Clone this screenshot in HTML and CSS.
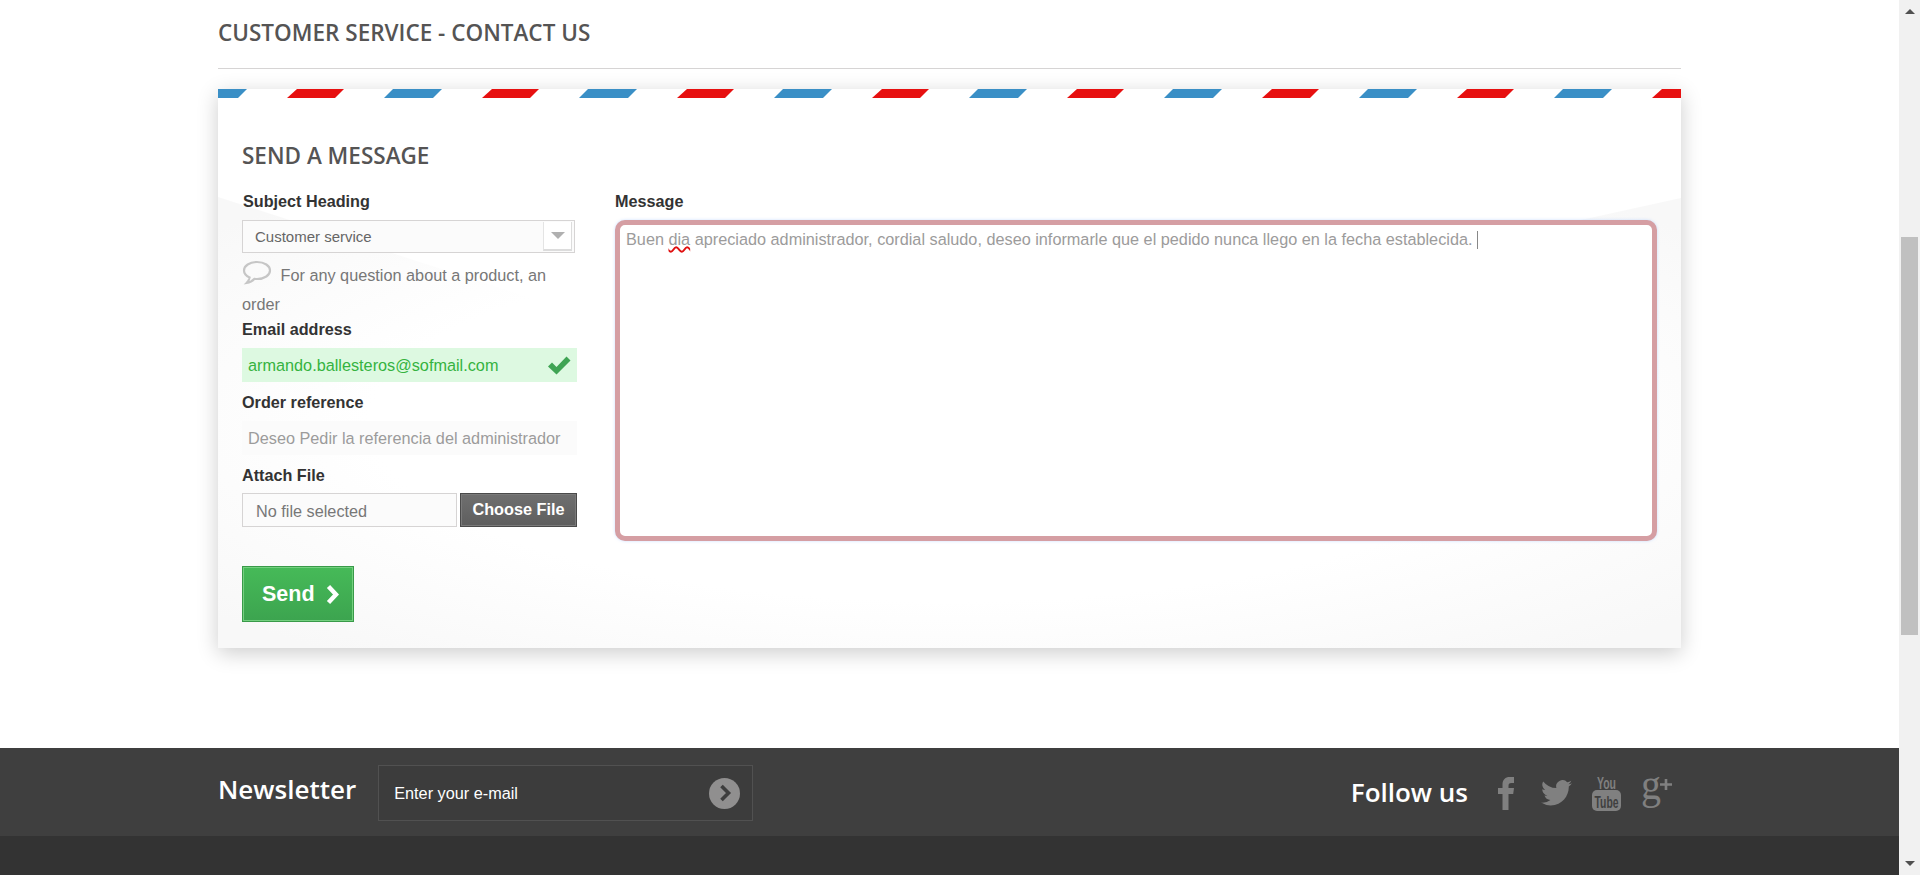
FILE: index.html
```html
<!DOCTYPE html>
<html lang="en">
<head>
  <meta charset="UTF-8" />
  <title>Customer service - Contact us</title>
  <link rel="stylesheet" href="styles.css">
</head>
<body>

  <div class="page">
    <div class="main">
      <h1 class="page-heading">CUSTOMER SERVICE - CONTACT US</h1>

      <form class="contact-form">
        <svg class="form-shade" viewBox="0 0 1463 559" preserveAspectRatio="none">
          <defs>
            <radialGradient id="shade" cx="50%" cy="50%" r="66%">
              <stop offset="0.6" stop-color="#ffffff" />
              <stop offset="1" stop-color="#f8f8f8" />
            </radialGradient>
          </defs>
          <polygon fill="url(#shade)" points="0,108 394,235 731,270 1463,109 1463,559 0,559" />
        </svg>

        <svg class="airmail" width="100%" height="9">
          <defs>
            <pattern id="stripes" width="195" height="9" patternUnits="userSpaceOnUse">
              <polygon fill="#3a8fc6" points="175,0 224,0 215,9 166,9" />
              <polygon fill="#3a8fc6" points="-20,0 29,0 20,9 -29,9" />
              <polygon fill="#e71010" points="79,0 126,0 117,9 69,9" />
            </pattern>
          </defs>
          <rect width="100%" height="9" fill="url(#stripes)" />
        </svg>

        <div class="form-body">
          <h3 class="form-title">SEND A MESSAGE</h3>
          <div class="form-cols">
            <div class="col-left">
              <div class="field subject">
                <label>Subject Heading</label>
                <div class="select-box">
                  <span>Customer service</span>
                  <span class="select-arrow"></span>
                </div>
                <p class="help-text">
                  <svg class="bubble" width="30" height="26" viewBox="0 0 30 26">
                    <path d="M15 2C7.500 2 2 5.800 2 10.500c0 3 2.200 5.400 5.600 6.900-.2 1.900-1.100 3.600-3 5.600 3.500-.5 6-2 7.900-4.200.8.100 1.700.2 2.500.2 7.500 0 13-3.800 13-8.500S22.500 2 15 2z" fill="none" stroke="#c6c6c6" stroke-width="2.200" />
                  </svg>
                  For any question about a product, an order
                </p>
              </div>
              <div class="field">
                <label>Email address</label>
                <div class="text-input ok">
                  <span>armando.ballesteros@sofmail.com</span>
                  <svg width="24" height="19" viewBox="0 0 24 19">
                    <path d="M1 10.500 5 6.500l4.500 4.500L19.500.5 23.500 4.500 9.500 18.500z" fill="#3fa454" />
                  </svg>
                </div>
              </div>
              <div class="field">
                <label>Order reference</label>
                <div class="text-input"><span>Deseo Pedir la referencia del administrador</span></div>
              </div>
              <div class="field">
                <label>Attach File</label>
                <div class="file-row">
                  <span class="file-name">No file selected</span>
                  <span class="file-btn">Choose File</span>
                </div>
              </div>
            </div>
            <div class="col-right">
              <label>Message</label>
              <div class="message-box">Buen <span class="typo">dia</span> apreciado administrador, cordial saludo, deseo informarle que el pedido nunca llego en la fecha establecida. <span class="caret"></span></div>
            </div>
          </div>
          <button class="send-btn" type="button">
            Send
            <svg width="14" height="21" viewBox="0 0 14 21">
              <path d="M2.500 2.500 10 10.500 2.500 18.500" fill="none" stroke="#fff" stroke-width="4.400" />
            </svg>
          </button>
        </div>
      </form>

      <footer class="footer">
        <div class="footer-top">
          <div class="footer-inner">
            <div class="newsletter">
              <h4>Newsletter</h4>
              <div class="news-input">
                <span>Enter your e-mail</span>
                <span class="news-go">
                  <svg width="16" height="20" viewBox="0 0 16 20">
                    <path d="M4.500 3l7 7-7 7" fill="none" stroke="#3d3d3d" stroke-width="3.600" />
                  </svg>
                </span>
              </div>
            </div>
            <div class="follow">
              <h4>Follow us</h4>
              <div class="social">
                <svg class="fb" width="16" height="33" viewBox="0 0 16 33">
                  <path d="M4.500 33V17H0v-6h4.500V7.500C4.500 2.500 7.500 0 11.500 0H16v6h-2.500C11 6 10.500 7 10.500 9v2H16l-.8 6h-4.700v16z" fill="#808080" />
                </svg>
                <svg width="31" height="26" viewBox="0 0 24 20">
                  <path d="M24 2.400c-.9.400-1.800.7-2.800.8 1-.6 1.800-1.600 2.200-2.700-1 .6-2 1-3.100 1.200A4.900 4.900 0 0 0 11.900 6.200 14 14 0 0 1 1.700 1a4.900 4.900 0 0 0 1.500 6.600c-.8 0-1.600-.2-2.200-.6v.1c0 2.400 1.700 4.400 3.900 4.800-.7.200-1.500.2-2.200.1.600 2 2.400 3.400 4.600 3.400A9.900 9.900 0 0 1 0 17.400 14 14 0 0 0 7.500 19.600c9 0 14-7.500 14-14v-.6c1-.7 1.800-1.600 2.500-2.600z" fill="#808080" />
                </svg>
                <svg class="yt" width="29" height="35" viewBox="0 0 29 35">
                  <rect x="0" y="14" width="29" height="21" rx="5" fill="#808080" />
                  <text class="yt-you" x="5" y="13" textLength="19" lengthAdjust="spacingAndGlyphs">You</text>
                  <text class="yt-tube" x="2.500" y="31.500" textLength="24" lengthAdjust="spacingAndGlyphs">Tube</text>
                </svg>
                <svg class="gp" width="31" height="31" viewBox="0 0 31 31">
                  <text class="gp-g" x="0" y="20.500" textLength="20" lengthAdjust="spacingAndGlyphs">g</text>
                  <path d="M19 6.500h12M25 1v11" fill="none" stroke="#808080" stroke-width="2.600" />
                </svg>
              </div>
            </div>
          </div>
        </div>
        <div class="footer-bottom"></div>
      </footer>
    </div>

    <div class="scrollbar">
      <span class="arrow up"></span>
      <div class="track"><div class="thumb"></div></div>
      <span class="arrow down"></span>
    </div>
  </div>

</body>
</html>
```

FILE: styles.css
```css
* {
  box-sizing: border-box;
}

html, body {
  height: 100%;
  margin: 0;
  overflow: hidden;
}

body {
  font-family: "Liberation Sans", Arial, sans-serif;
  font-size: 16.25px;
  color: #777;
  background: #fff;
}

.page {
  display: flex;
  height: 875px;
}

.main {
  flex: 1;
  display: flex;
  flex-direction: column;
  min-width: 0;
}

/* heading */
.page-heading {
  width: 1463px;
  height: 69px;
  margin: 0 0 20px 218px;
  padding-top: 18px;
  font-family: "Open Sans", sans-serif;
  font-size: 22.5px;
  line-height: 30px;
  font-weight: 600;
  color: #555454;
  border-bottom: 1px solid #d6d4d4;
}

/* card */
.contact-form {
  position: relative;
  width: 1463px;
  height: 559px;
  margin-left: 218px;
  background: #fff;
  box-shadow: 0 5px 20px rgba(0, 0, 0, 0.2);
}

.airmail {
  position: absolute;
  left: 0;
  top: 0;
  display: block;
}

.form-shade {
  position: absolute;
  left: 0;
  top: 0;
  width: 100%;
  height: 100%;
}

.form-body {
  position: relative;
  padding: 52px 24px 0 24px;
}

.form-title {
  margin: 0 0 20px;
  font-family: "Open Sans", sans-serif;
  font-size: 22.5px;
  line-height: 30px;
  font-weight: 600;
  color: #555454;
}

.form-cols {
  display: flex;
  gap: 38px;
}

.col-left {
  width: 335px;
  flex: none;
}

.col-right {
  flex: 1;
}

label {
  display: block;
  font-size: 16.2px;
  line-height: 20px;
  font-weight: bold;
  color: #333;
}

.field {
  margin-bottom: 10px;
}

.field.subject {
  margin-bottom: 0;
}

.field.subject label {
  padding-left: 1px;
}

.col-right label {
  margin-bottom: 9px;
}

/* fields */
.select-box {
  display: flex;
  justify-content: space-between;
  align-items: center;
  width: 333px;
  height: 33px;
  margin-top: 9px;
  padding-left: 12px;
  border: 1px solid #d6d4d4;
  background: #fbfbfb;
  font-size: 15px;
  color: #666;
}

.select-arrow {
  position: relative;
  width: 29px;
  height: 29px;
  margin-right: 2px;
  background: #fff;
  border-left: 1px solid #e4e4e4;
  border-bottom: 2px solid #dcdcdc;
  border-right: 1px solid #dcdcdc;
}

.select-arrow::after {
  content: "";
  position: absolute;
  left: 7px;
  top: 10px;
  border-left: 7px solid transparent;
  border-right: 7px solid transparent;
  border-top: 7px solid #b0b0b0;
}

.help-text {
  margin: 8px 0 0;
  line-height: 29px;
  color: #777;
}

.bubble {
  margin: -6px 4px 0 0;
  vertical-align: -5px;
}

.text-input {
  display: flex;
  justify-content: space-between;
  align-items: center;
  width: 335px;
  height: 34px;
  margin-top: 9px;
  padding: 0 6px;
  background: #fbfbfb;
  color: #9c9b9b;
}

.text-input.ok {
  background: #ddf9e1;
  color: #35b33f;
}

.file-row {
  display: flex;
  gap: 3px;
  margin-top: 8px;
}

.file-name {
  width: 215px;
  height: 34px;
  padding-left: 13px;
  border: 1px solid #d6d4d4;
  background: #fbfbfb;
  line-height: 35px;
  color: #777;
}

.file-btn {
  width: 117px;
  height: 34px;
  border: 1px solid #4a4a4a;
  background: linear-gradient(#6f6f6f, #5e5e5e);
  box-shadow: inset 0 0 0 1px #7a7a7a;
  line-height: 30px;
  font-weight: bold;
  text-align: center;
  color: #fff;
}

.message-box {
  height: 321px;
  padding: 4px 6px;
  border: 5px solid #d59ea3;
  border-radius: 10px;
  background: #fff;
  box-shadow: 0 0 3px rgba(150, 190, 255, 0.5);
  line-height: 20px;
  color: #9c9b9b;
}

.typo {
  text-decoration: underline wavy #e01010 1.5px;
}

.caret {
  display: inline-block;
  width: 1px;
  height: 18px;
  vertical-align: -4px;
  background: #888;
}

.send-btn {
  display: flex;
  align-items: center;
  gap: 11px;
  width: 112px;
  height: 56px;
  margin-top: 25px;
  padding: 0 0 0 19px;
  border: 1px solid #399a49;
  background: linear-gradient(#46ba58, #3ca44f);
  box-shadow: inset 0 0 0 1px #74d080;
  font-family: "Liberation Sans", Arial, sans-serif;
  font-size: 21.5px;
  font-weight: bold;
  color: #fff;
}

/* footer */
.footer {
  margin-top: auto;
}

.footer-top {
  height: 88px;
  background: #3f3f3f;
}

.footer-bottom {
  height: 39px;
  background: #333;
}

.footer-inner {
  display: flex;
  justify-content: space-between;
  width: 1463px;
  margin-left: 218px;
}

.footer h4 {
  margin: 0;
  font-family: "Open Sans", sans-serif;
  font-size: 26px;
  line-height: 32px;
  font-weight: 600;
  color: #fff;
}

.newsletter {
  display: flex;
  gap: 22px;
  padding-top: 17px;
}

.newsletter h4 {
  margin-top: 8px;
}

.news-input {
  display: flex;
  justify-content: space-between;
  align-items: center;
  width: 375px;
  height: 56px;
  padding: 0 12px 0 15px;
  border: 1px solid #515151;
  background: #3c3c3c;
  color: #fff;
}

.news-go {
  display: flex;
  align-items: center;
  justify-content: center;
  width: 31px;
  height: 31px;
  border-radius: 50%;
  background: #908f8f;
}

.follow {
  display: flex;
  align-items: flex-start;
  padding: 28px 9px 0 0;
}

.social {
  display: flex;
  align-items: center;
  gap: 20px;
  height: 36px;
  margin: -1px 0 0 30px;
}

.social .fb {
  margin-right: 7px;
}

.social .yt, .social .gp {
  overflow: visible;
}

.yt-you, .yt-tube {
  font-family: "Liberation Sans", sans-serif;
  font-weight: bold;
  font-size: 17px;
}

.yt-you {
  fill: #808080;
}

.yt-tube {
  fill: #3f3f3f;
}

.gp-g {
  font-family: "Liberation Serif", serif;
  font-size: 44px;
  fill: #808080;
}

/* window scrollbar */
.scrollbar {
  display: flex;
  flex-direction: column;
  align-items: center;
  width: 21px;
  flex: none;
  background: #f1f1f1;
}

.track {
  flex: 1;
  width: 17px;
  padding-top: 223px;
}

.thumb {
  height: 398px;
  background: #c0c0c0;
}

.arrow {
  flex: none;
  width: 0;
  height: 0;
  border-left: 5px solid transparent;
  border-right: 5px solid transparent;
}

.arrow.up {
  margin: 9px 0 0;
  border-bottom: 5px solid #505050;
}

.arrow.down {
  margin: 0 0 9px;
  border-top: 5px solid #505050;
}
```
